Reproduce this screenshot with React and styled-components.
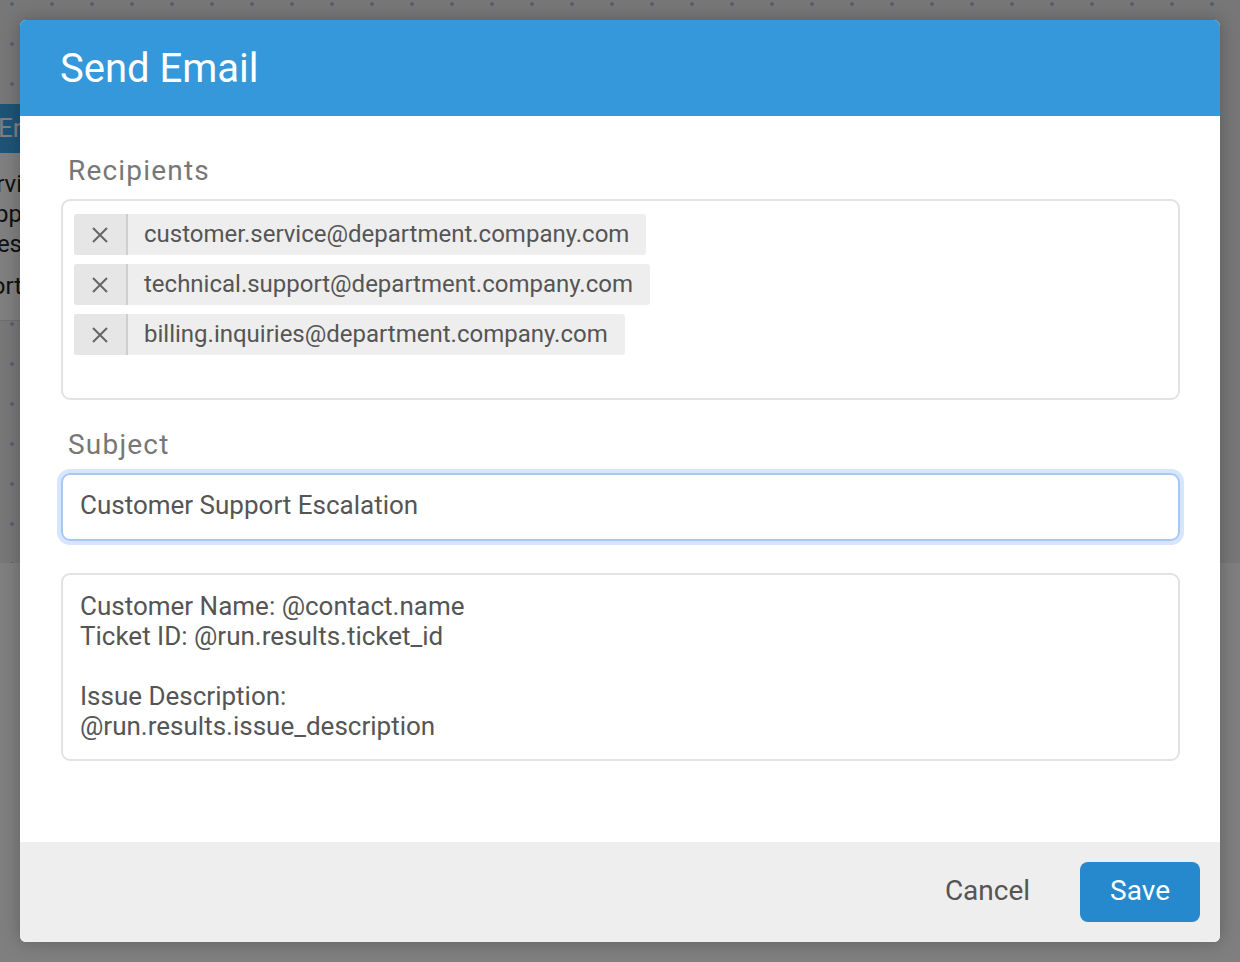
import React from "react"
import styled, { createGlobalStyle } from "styled-components"

const GlobalStyle = createGlobalStyle`
  html, body {
    margin: 0;
    padding: 0;
    font-family: Roboto, "Liberation Sans", sans-serif;
  }
`

const recipients = [
  "customer.service@department.company.com",
  "technical.support@department.company.com",
  "billing.inquiries@department.company.com",
]

const bodyLines = [
  "Customer Name: @contact.name",
  "Ticket ID: @run.results.ticket_id",
  "",
  "Issue Description:",
  "@run.results.issue_description",
]

//{{{ canvas behind the modal
const Page = styled.div`
  position: relative;
  width: 1240px;
  height: 962px;
  overflow: hidden;
  background: #fff;
`

const Canvas = styled.div`
  position: relative;
  height: 563px;
  background-color: #eeeeee;
  background-image: radial-gradient(circle, #a9c0d6 1.6px, transparent 2px);
  background-size: 40px 40px;
  background-position: -8px -16px;
`

const Node = styled.div`
  position: absolute;
  left: -200px;
  top: 104px;
  width: 222px;
  height: 216px;
  background: #fff;
  border-bottom: 1px solid #ddd;
  overflow: hidden;
  text-align: right;
  white-space: nowrap;
  font-size: 24px;
  color: #222;
  .head {
    height: 49px;
    line-height: 49px;
    background: #3ca6ee;
    color: #fff;
    font-size: 26px;
    text-align: left;
    padding-left: 198px;
  }
  .line {
    line-height: 30px;
  }
  .first { margin-top: 16px; }
  .gap { margin-top: 12px; }
`

const Overlay = styled.div`
  position: absolute;
  inset: 0;
  background: rgba(0, 0, 0, 0.5);
  padding: 20px;
  display: flex;
`
//}}}

//{{{ modal
const Modal = styled.div`
  flex: 1;
  display: flex;
  flex-direction: column;
  background: #fff;
  border-radius: 6px;
  overflow: hidden;
  box-shadow: 0 0 18px rgba(0, 0, 0, 0.25);
`

const Header = styled.div`
  height: 96px;
  background: #3498db;
  color: #fff;
  display: flex;
  align-items: center;
  padding: 0 40px;
  box-sizing: border-box;
  font: 400 40px Roboto, sans-serif;
`

const Body = styled.div`
  flex: 1;
  padding: 38px 40px 0 41px;
  display: flex;
  flex-direction: column;
`

const Label = styled.div`
  font: 400 28px Roboto, sans-serif;
  letter-spacing: 1.2px;
  color: #777;
  padding-left: 7px;
  margin-bottom: 11px;
  line-height: 34px;
`

const Box = styled.div`
  border: 2px solid ${p => (p.focus ? "#a6c8f5" : "#e2e2e2")};
  border-radius: 9px;
  box-shadow: ${p => (p.focus ? "0 0 0 4px #d7e6fc" : "none")};
  font: 400 26px Roboto, sans-serif;
  color: #555;
`

const TagBox = styled(Box)`
  height: 201px;
  box-sizing: border-box;
  padding: 13px 11px;
  display: flex;
  flex-direction: column;
  align-items: flex-start;
  gap: 9px;
  margin-bottom: 28px;
`

const Tag = styled.div`
  display: flex;
  height: 41px;
  background: #eeeeee;
  border-radius: 3px;
  font: 400 24px Roboto, sans-serif;
  color: #555;
  .x {
    width: 52px;
    background: #e6e6e6;
    border-right: 2px solid #cfcfcf;
    display: flex;
    align-items: center;
    justify-content: center;
    border-radius: 3px 0 0 3px;
  }
  .text {
    display: flex;
    align-items: center;
    padding: 0 17px 2px 16px;
  }
`

const SubjectInput = styled(Box)`
  height: 68px;
  box-sizing: border-box;
  display: flex;
  align-items: center;
  padding: 0 17px 4px;
  margin-bottom: 32px;
`

const TextArea = styled(Box)`
  height: 188px;
  box-sizing: border-box;
  padding: 16px 17px;
  line-height: 30px;
  div { min-height: 30px; }
`

const Footer = styled.div`
  height: 100px;
  background: #eeeeee;
  display: flex;
  align-items: center;
  justify-content: flex-end;
  padding: 0 20px;
  gap: 50px;
`

const Button = styled.div`
  font: 400 28px Roboto, sans-serif;
  color: ${p => (p.primary ? "#fff" : "#555")};
  background: ${p => (p.primary ? "#2789cd" : "transparent")};
  border-radius: 8px;
  height: 60px;
  padding: 0 ${p => (p.primary ? "30px" : "0")};
  display: flex;
  align-items: center;
  padding-bottom: 3px;
  box-sizing: border-box;
`
//}}}

const Cross = () => (
  <svg width="18" height="18" viewBox="0 0 18 18">
    <path d="M2 2 L16 16 M16 2 L2 16" stroke="#666" strokeWidth="2" />
  </svg>
)

export default function App() {
  return (
    <Page>
      <GlobalStyle />
      <Canvas>
        <Node>
          <div className="head">Email</div>
          <div className="line first">customer.servi</div>
          <div className="line">technical.supp</div>
          <div className="line">billing.inquiries</div>
          <div className="line gap">Customer Support</div>
        </Node>
      </Canvas>
      <Overlay>
        <Modal>
          <Header>Send Email</Header>
          <Body>
            <Label>Recipients</Label>
            <TagBox>
              {recipients.map(r => (
                <Tag key={r}>
                  <div className="x"><Cross /></div>
                  <div className="text">{r}</div>
                </Tag>
              ))}
            </TagBox>
            <Label>Subject</Label>
            <SubjectInput focus>Customer Support Escalation</SubjectInput>
            <TextArea>
              {bodyLines.map((l, i) => <div key={i}>{l}</div>)}
            </TextArea>
          </Body>
          <Footer>
            <Button>Cancel</Button>
            <Button primary>Save</Button>
          </Footer>
        </Modal>
      </Overlay>
    </Page>
  )
}
